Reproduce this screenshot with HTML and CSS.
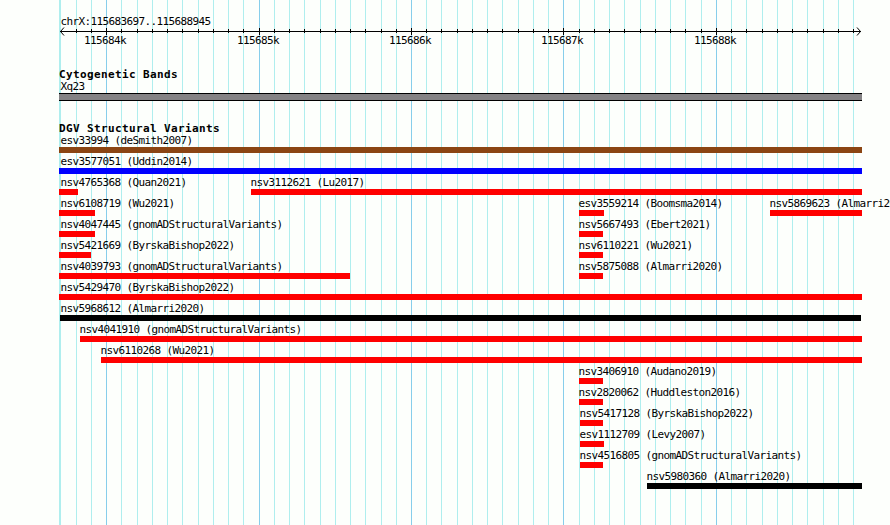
FILE: index.html
```
<!DOCTYPE html>
<html lang="en">
<head>
<meta charset="utf-8">
<title>chrX:115683697..115688945</title>
<link rel="stylesheet" href="styles.css">
</head>
<body>
<main class="browser">
  <svg class="gridlines" width="890" height="525" aria-hidden="true"><rect class="minor" x="59" y="0" width="1" height="525"/><g id="lines"></g></svg>
  <header class="region">
    <div class="label">chrX:115683697..115688945</div>
    <svg class="ruler" width="890" height="9" aria-label="Scale">
      <path class="axis" d="M60 4.5H861M64 .5L60.5 4.5L64 8.5M857 .5L860.5 4.5L857 8.5"/>
      <g id="ticks"></g>
    </svg>
    <div class="scale">
      <span class="label">115684k</span><span class="label">115685k</span><span class="label">115686k</span><span class="label">115687k</span><span class="label">115688k</span>
    </div>
  </header>
  <section class="track bands">
    <h2>Cytogenetic Bands</h2>
    <div class="label">Xq23</div>
    <div class="band"></div>
  </section>
  <section class="track structural">
    <h2>DGV Structural Variants</h2>
    <div id="variants"></div>
  </section>
</main>
<script src="tracks.js"></script>
</body>
</html>
```
FILE: styles.css
```
body {
  margin: 0;
  background: #fdfffc;
  color: #000;
  font-family: "DejaVu Sans Mono", "Liberation Mono", monospace;
}

.browser {
  position: relative;
  width: 890px;
  height: 525px;
  overflow: hidden;
  isolation: isolate;
}

.gridlines {
  position: absolute;
  inset: 0;
  z-index: -1;
  shape-rendering: crispEdges;
}

.minor { fill: #afeeee; }
.major { fill: #87ceeb; }

.region {
  height: 68px;
  padding-top: 13px;
  box-sizing: border-box;
}

.label {
  height: 14px;
  padding-left: 60.4px;
  font-size: 11px;
  line-height: 18px;
  letter-spacing: -0.623px;
  white-space: pre;
}

.ruler {
  display: block;
}

.axis {
  fill: none;
  stroke: #000;
  stroke-width: 1;
}

.scale {
  display: grid;
  grid-template-columns: 153px 152px 152px 153px 1fr;
  margin: -4px 0 0 84px;
}

.scale .label { padding-left: 0; }

.track h2 {
  height: 12px;
  margin: 0;
  padding-left: 59px;
  font-size: 11px;
  line-height: 13px;
  font-weight: bold;
  letter-spacing: 0.377px;
}

.structural h2 {
  line-height: 17px;
}

.bands {
  height: 52px;
}

.bands .label {
  height: 13px;
  line-height: 14px;
}

.band {
  box-sizing: border-box;
  width: 803px;
  height: 8px;
  margin-left: 59px;
  border: solid #000;
  border-width: 1px 0;
  background: #848284;
}

.row {
  display: grid;
  height: 21px;
}

.variant {
  grid-area: 1 / 1;
}

.variant .label {
  height: 15px;
  padding-left: 0;
  text-indent: -0.5px;
}

.variant.edge .label {
  text-indent: 1.4px;
}

.variant.edge .label.near {
  text-indent: 0.4px;
}

.bar {
  height: 6px;
  background: #f00;
}

.brown { background: #8b4513; }
.blue { background: #00f; }
.black { background: #000; }
```
FILE: tracks.js
```
const SVG = "http://www.w3.org/2000/svg";

function rect(parent, cls, x, y, width, height) {
  const r = document.createElementNS(SVG, "rect");
  Object.entries({ class: cls, x, y, width, height }).forEach(([k, v]) => r.setAttribute(k, v));
  parent.append(r);
}

const gridX = [60, 76, 91, 106, 121, 137, 152, 167, 182, 198, 213, 228, 243, 259, 274, 289, 304,
  320, 335, 350, 365, 381, 396, 411, 426, 441, 457, 472, 487, 502, 518, 533, 548, 563, 579, 594,
  609, 624, 640, 655, 670, 685, 701, 716, 731, 746, 762, 777, 792, 807, 823, 838, 853];
const majorX = [106, 259, 411, 563, 716];
const lines = document.getElementById("lines");
const ticks = document.getElementById("ticks");

gridX.forEach((x, i) => {
  const major = majorX.includes(x);
  rect(lines, major ? "major" : "minor", x, 0, 1, 525);
  if (i > 0) rect(ticks, "tick", x, major ? 1 : 2, 1, major ? 7 : 4);
});

// Each row lists [name, bar start, bar end, colour].
const rows = [
  [["esv33994 (deSmith2007)", 59, 862, "brown"]],
  [["esv3577051 (Uddin2014)", 59, 862, "blue"]],
  [["nsv4765368 (Quan2021)", 59, 78], ["nsv3112621 (Lu2017)", 251, 862]],
  [["nsv6108719 (Wu2021)", 59, 95], ["esv3559214 (Boomsma2014)", 579, 604], ["nsv5869623 (Almarri2020)", 770, 862]],
  [["nsv4047445 (gnomADStructuralVariants)", 59, 95], ["nsv5667493 (Ebert2021)", 579, 603]],
  [["nsv5421669 (ByrskaBishop2022)", 59, 91], ["nsv6110221 (Wu2021)", 579, 603]],
  [["nsv4039793 (gnomADStructuralVariants)", 59, 350], ["nsv5875088 (Almarri2020)", 579, 603]],
  [["nsv5429470 (ByrskaBishop2022)", 59, 862]],
  [["nsv5968612 (Almarri2020)", 60, 861, "black"]],
  [["nsv4041910 (gnomADStructuralVariants)", 80, 862]],
  [["nsv6110268 (Wu2021)", 101, 862]],
  [["nsv3406910 (Audano2019)", 579, 603]],
  [["nsv2820062 (Huddleston2016)", 579, 603]],
  [["nsv5417128 (ByrskaBishop2022)", 580, 603]],
  [["esv1112709 (Levy2007)", 580, 604]],
  [["nsv4516805 (gnomADStructuralVariants)", 580, 603]],
  [["nsv5980360 (Almarri2020)", 647, 862, "black"]]
];

const variants = document.getElementById("variants");
rows.forEach(items => {
  const row = document.createElement("div");
  row.className = "row";
  items.forEach(([name, start, end, colour = "red"]) => {
    const item = document.createElement("div");
    item.className = start <= 60 ? "variant edge" : "variant";
    item.style.marginLeft = start + "px";
    const label = document.createElement("div");
    label.className = start === 60 ? "label near" : "label";
    label.textContent = name;
    const bar = document.createElement("div");
    bar.className = "bar " + colour;
    bar.style.width = end - start + "px";
    item.append(label, bar);
    row.append(item);
  });
  variants.append(row);
});
```
